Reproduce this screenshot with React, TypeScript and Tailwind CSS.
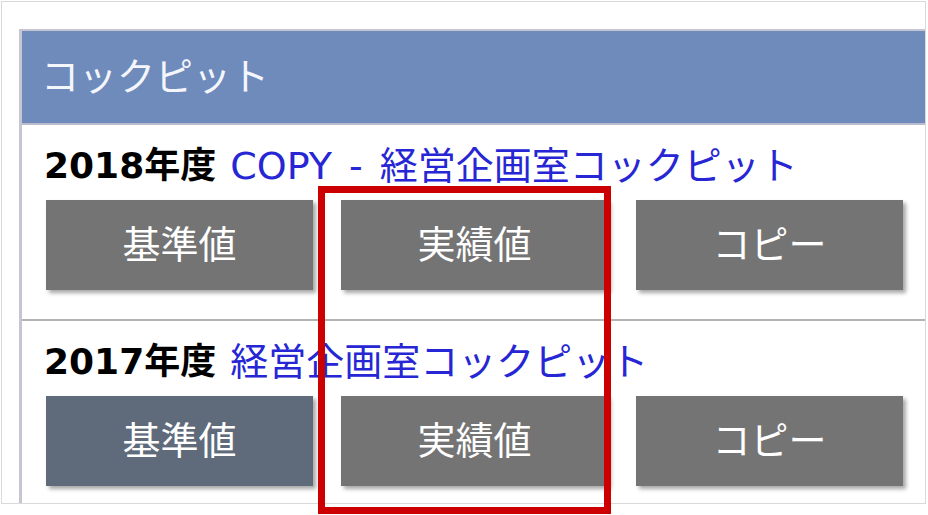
import React from "react";

const font = { fontFamily: '"DejaVu Sans", "Noto Sans CJK JP", sans-serif' };

function Btn({ label, dark }: { label: string; dark?: boolean }) {
  return (
    <div
      className={`w-[267px] h-[90px] flex items-center justify-center text-white text-[38px] leading-none shadow-[3px_3px_4px_rgba(0,0,0,0.35)] ${
        dark ? "bg-[#5f6b7b]" : "bg-[#747474]"
      }`}
    >
      {label}
    </div>
  );
}

function Row({
  year,
  copy,
  title,
  first,
  darkFirst,
}: {
  year: string;
  copy?: boolean;
  title: string;
  first?: boolean;
  darkFirst?: boolean;
}) {
  return (
    <div
      className={`pl-[24px] ${first ? "pt-[21px] pb-[29px] border-b-2 border-[#b4b4b4]" : "pt-[21px] pb-[20px]"}`}
    >
      <div className="flex items-center h-[40px] whitespace-nowrap">
        <span className="font-bold text-black -ml-[2px] text-[36px] leading-[40px]">{year}</span>
        <span className="ml-[14px] text-[#2626d4] text-[38px] leading-[40px] [word-spacing:5px]">
          {copy ? "COPY - " : ""}
          {title}
        </span>
      </div>
      <div className="flex gap-[28px] mt-[14px]">
        <Btn label="基準値" dark={darkFirst} />
        <Btn label="実績値" />
        <Btn label="コピー" />
      </div>
    </div>
  );
}

export default function App() {
  return (
    <div className="relative w-[928px] h-[515px] bg-white overflow-hidden" style={font}>
      <div className="ml-[1px] mt-[1px] w-[925px] h-[503px] border border-[#d9d9d9] overflow-hidden pt-[27px] pl-[17px]">
        <div className="w-[960px] h-[520px] border-l-[3px] border-t-2 border-[#c6c6d2]">
          <div className="h-[94px] bg-[#6f8bbb] flex items-center pl-[19px] border-b-2 border-[#b8bccc]">
            <span className="text-[#f4f6fb] text-[38px] leading-none">コックピット</span>
          </div>
          <Row year="2018年度" copy title="経営企画室コックピット" first />
          <Row year="2017年度" title="経営企画室コックピット" darkFirst />
        </div>
      </div>
      <div className="absolute left-[318px] top-[186px] w-[293px] h-[328px] border-[7px] border-[#cc0000]" />
    </div>
  );
}
